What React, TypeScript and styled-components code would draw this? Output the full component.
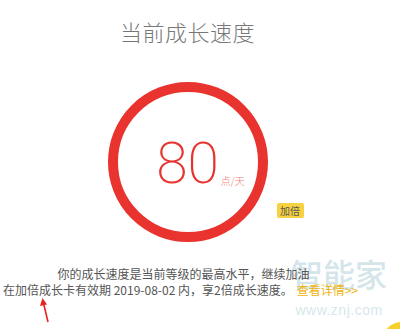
import styled, { createGlobalStyle } from 'styled-components';

const GlobalStyle = createGlobalStyle`
  html, body {
    margin: 0;
    padding: 0;
    background: #ffffff;
  }
  body {
    font-family: 'Noto Sans CJK SC', 'Noto Sans', sans-serif;
  }
`;

const Page = styled.div`
  position: relative;
  width: 400px;
  height: 329px;
  overflow: hidden;
  background: #fff;
`;

const Column = styled.div`
  position: relative;
  z-index: 1;
  width: 375px;
  display: flex;
  flex-direction: column;
  align-items: center;
`;

const Title = styled.h1`
  margin: 17px 0 0;
  font-size: 22px;
  line-height: 28px;
  font-weight: 300;
  color: #777;
  letter-spacing: 0.5px;
`;

const GaugeRow = styled.div`
  position: relative;
  margin-top: 37px;
  width: 160px;
  height: 160px;
`;

const Ring = styled.div`
  box-sizing: border-box;
  width: 160px;
  height: 160px;
  border-radius: 50%;
  border: 10px solid #e8332e;
  display: flex;
  align-items: center;
  justify-content: center;
`;

const Value = styled.div`
  position: relative;
  font-family: Roboto, 'Noto Sans', sans-serif;
  font-weight: 200;
  font-size: 57px;
  line-height: 1;
  color: #e8332e;
  margin-top: 2px;
`;

const Unit = styled.span`
  position: absolute;
  left: 100%;
  bottom: 6px;
  margin-left: 2px;
  white-space: nowrap;
  font-family: 'Noto Sans CJK SC', sans-serif;
  font-size: 10px;
  line-height: 10px;
  color: #ef7a73;
`;

const Badge = styled.span`
  position: absolute;
  left: 169px;
  top: 121px;
  width: 27px;
  height: 15px;
  border-radius: 2px;
  background: #f7d13f;
  color: #555;
  font-size: 10px;
  line-height: 15px;
  text-align: center;
`;

const Note = styled.p`
  position: relative;
  z-index: 1;
  margin: 0;
  font-size: 12px;
  line-height: 16px;
  color: #555;
  white-space: nowrap;
`;

const FirstLine = styled(Note)`
  margin-top: 24px;
  margin-left: -8px;
  text-align: center;
`;

const SecondLine = styled(Note)`
  padding-left: 3px;
`;

const MoreLink = styled.span`
  margin-left: 4px;
  color: #f0b30c;
`;

const Watermark = styled.div`
  position: absolute;
  z-index: 0;
  left: 289px;
  top: 256px;
  width: 100px;
  display: flex;
  flex-direction: column;
  align-items: center;
  color: rgba(170, 205, 214, 0.5);
  pointer-events: none;
`;

const WatermarkName = styled.span`
  font-size: 32px;
  line-height: 34px;
  font-weight: 500;
`;

const WatermarkUrl = styled.span`
  margin-top: 13px;
  font-family: 'Liberation Sans', Arial, sans-serif;
  font-size: 14px;
  line-height: 14px;
  letter-spacing: 0.5px;
`;

const CornerDot = styled.div`
  position: absolute;
  left: 382px;
  top: 322px;
  width: 40px;
  height: 40px;
  border-radius: 50%;
  background: #f7cf2a;
`;

const Arrow = styled.svg`
  position: absolute;
  z-index: 2;
  left: 36px;
  top: 296px;
`;

export default function App() {
  return (
    <Page>
      <GlobalStyle />
      <Watermark>
        <WatermarkName>智能家</WatermarkName>
        <WatermarkUrl>www.znj.com</WatermarkUrl>
      </Watermark>
      <Column>
        <Title>当前成长速度</Title>
        <GaugeRow>
          <Ring>
            <Value>
              80
              <Unit>点/天</Unit>
            </Value>
          </Ring>
          <Badge>加倍</Badge>
        </GaugeRow>
        <FirstLine>你的成长速度是当前等级的最高水平，继续加油</FirstLine>
      </Column>
      <SecondLine>
        在加倍成长卡有效期 2019-08-02 内，享2倍成长速度。
        <MoreLink>查看详情&gt;&gt;</MoreLink>
      </SecondLine>
      <CornerDot />
      <Arrow width="20" height="28" viewBox="0 0 20 28">
        <path d="M12 26 L7.5 7" stroke="#e8231f" strokeWidth="1.6" fill="none" />
        <path d="M6.5 2 L4 10 L11 8.5 Z" fill="#e8231f" />
      </Arrow>
    </Page>
  );
}
